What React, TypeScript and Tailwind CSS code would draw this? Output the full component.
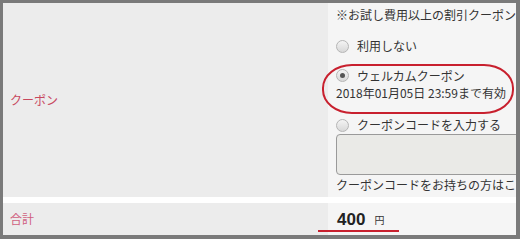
const jp = { fontFamily: '"Noto Sans CJK JP", "Noto Sans", sans-serif' }

const Radio = ({ checked = false }: { checked?: boolean }) => (
  <span className="flex h-[13px] w-[13px] shrink-0 items-center justify-center rounded-full border border-[#b5b5b5] bg-gradient-to-b from-[#f4f4f4] to-[#d8d8d8]">
    {checked && <span className="h-[5px] w-[5px] rounded-full bg-[#555]" />}
  </span>
)

export default function App() {
  return (
    <div
      className="relative h-[239px] w-[520px] overflow-hidden border-t-[3px] border-r-[4px] border-b-[4px] border-l-[3px] border-[#7a7a7a] bg-white text-[12px] text-[#333]"
      style={jp}
    >
      <div className="grid h-[194px] grid-cols-[325px_1fr]">
        <div className="flex items-center bg-[#ececec] pl-[7px] text-[#c8485e]">クーポン</div>
        <div className="flex flex-col overflow-hidden whitespace-nowrap bg-[#f5f5f5] pt-[3px] pl-[8px]">
          <div className="h-[18px] leading-[18px]">※お試し費用以上の割引クーポンは</div>
          <div className="mt-[13px] flex h-[18px] items-center gap-[8px] leading-[18px]">
            <Radio />
            <span>利用しない</span>
          </div>
          <div className="mt-[12px] flex h-[17px] items-center gap-[8px] leading-[17px]">
            <Radio checked />
            <span>ウェルカムクーポン</span>
          </div>
          <div className="h-[17px] leading-[17px]">2018年01月05日 23:59まで有効</div>
          <div className="mt-[15px] flex h-[18px] items-center gap-[8px] leading-[18px]">
            <Radio />
            <span>クーポンコードを入力する</span>
          </div>
          <div className="h-[41px] w-[220px] shrink-0 rounded-[4px] border border-[#9a9a9a] bg-[#eaeae7]" />
          <div className="mt-[1px] h-[17px] leading-[17px]">クーポンコードをお持ちの方はこち</div>
        </div>
      </div>
      <div className="h-[6px] bg-white" />
      <div className="grid h-[32px] grid-cols-[325px_1fr]">
        <div className="flex items-center bg-[#ececec] pl-[7px] text-[#d0607e]">合計</div>
        <div className="flex items-center bg-[#f5f5f5] pl-[9px]">
          <span className="text-[17px] font-bold leading-none text-[#222]" style={{ fontFamily: '"Liberation Sans", Arial, sans-serif' }}>400</span>
          <span className="ml-[9px] mt-[2px] text-[10px] leading-none">円</span>
        </div>
      </div>

      {/* annotations drawn over the screenshot */}
      <div className="pointer-events-none absolute top-[61px] left-[319px] h-[50px] w-[192px] rounded-[30px/24px] border-2 border-[#c8202e]" />
      <div className="pointer-events-none absolute top-[227px] left-[315px] h-[2px] w-[81px] bg-[#c8202e]" />
    </div>
  )
}
